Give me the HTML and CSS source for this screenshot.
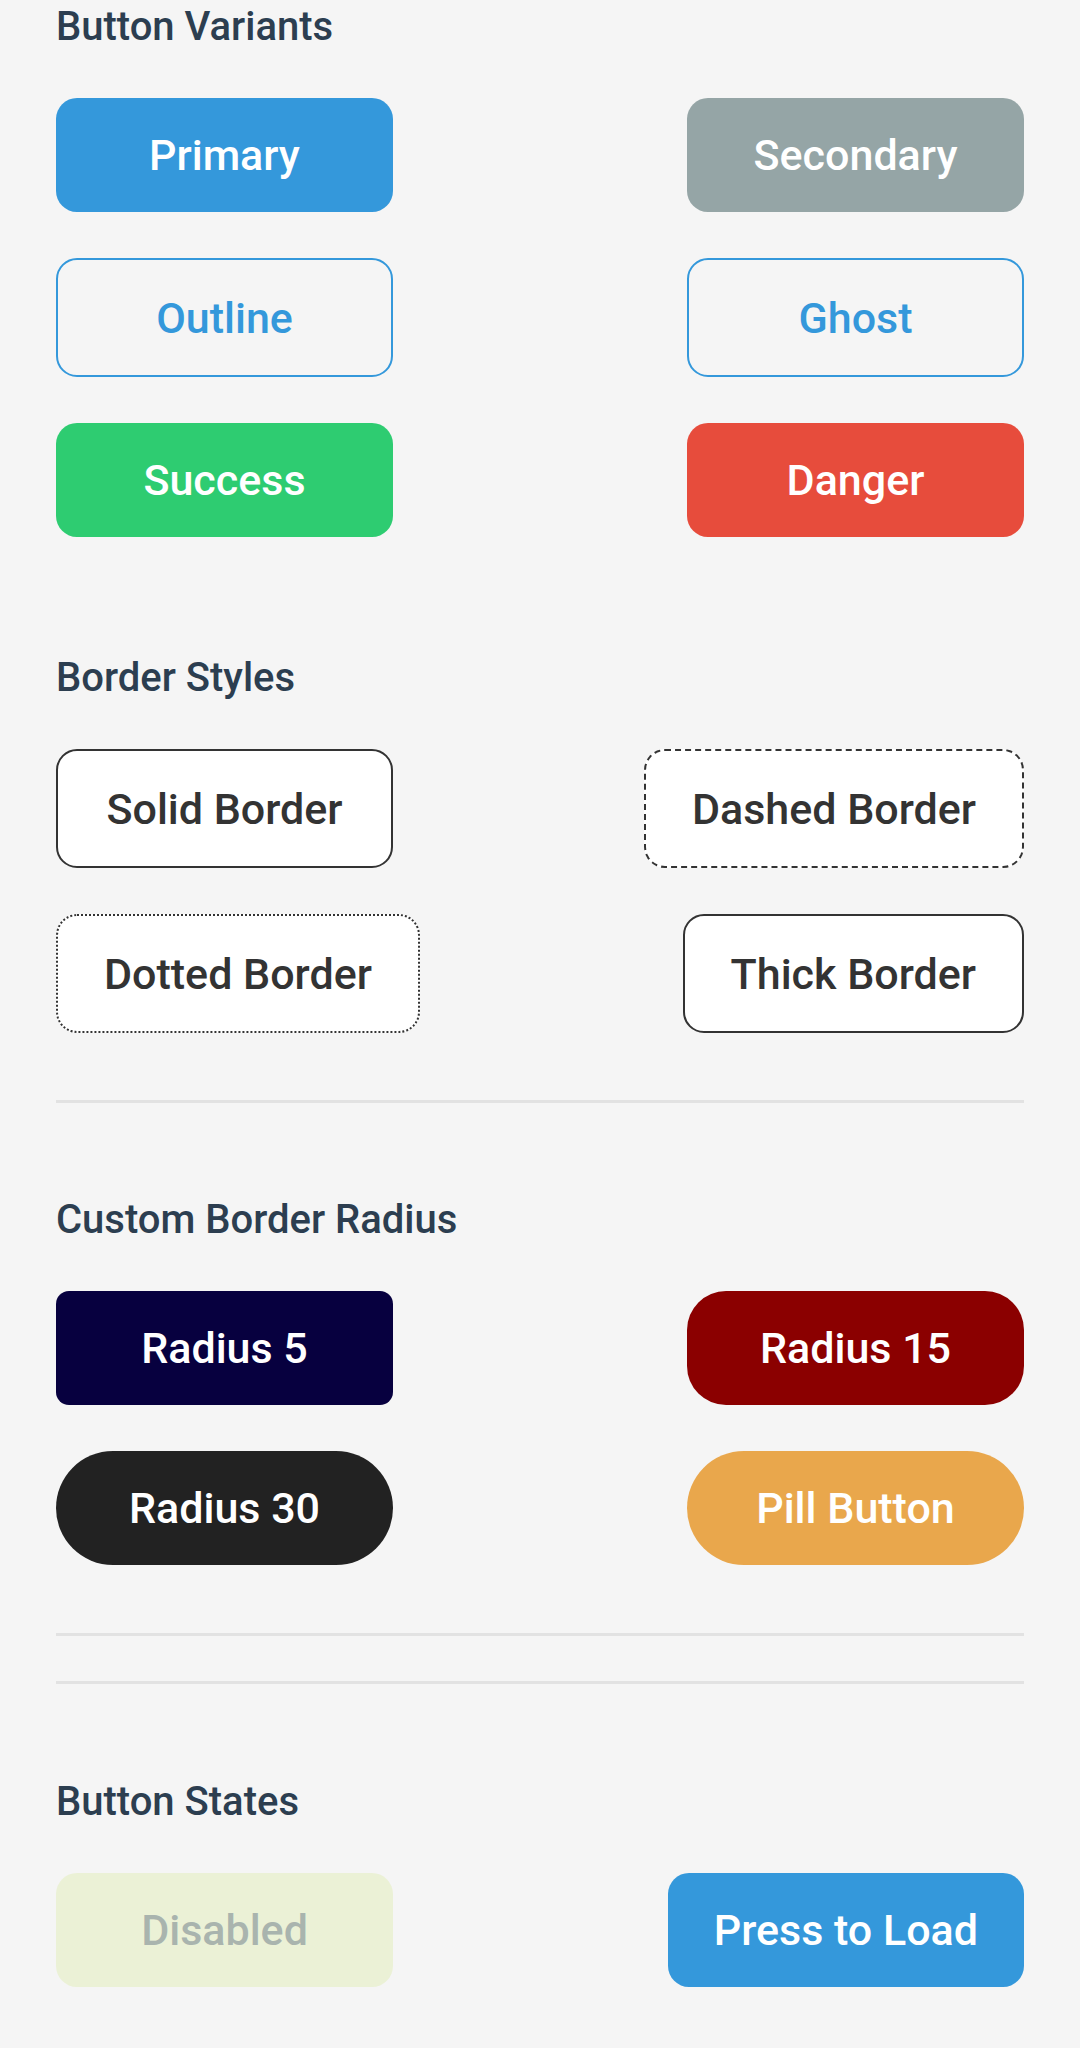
FILE: index.html
```html
<!DOCTYPE html>
<html lang="en">
<head>
<meta charset="utf-8">
<title>Buttons</title>
<link rel="stylesheet" href="styles.css">
</head>
<body>
<main class="page">
  <section class="section section-variants">
    <h2 class="title">Button Variants</h2>
    <div class="rows">
      <div class="row">
        <button class="btn btn-primary">Primary</button>
        <button class="btn btn-secondary">Secondary</button>
      </div>
      <div class="row">
        <button class="btn btn-outline">Outline</button>
        <button class="btn btn-ghost">Ghost</button>
      </div>
      <div class="row">
        <button class="btn btn-success">Success</button>
        <button class="btn btn-danger">Danger</button>
      </div>
    </div>
  </section>

  <section class="section">
    <h2 class="title">Border Styles</h2>
    <div class="rows">
      <div class="row">
        <button class="btn btn-bordered btn-solid">Solid Border</button>
        <button class="btn btn-bordered btn-dashed">Dashed Border</button>
      </div>
      <div class="row">
        <button class="btn btn-bordered btn-dotted">Dotted Border</button>
        <button class="btn btn-bordered btn-thick">Thick Border</button>
      </div>
    </div>
  </section>

  <hr class="divider divider-a">

  <section class="section">
    <h2 class="title">Custom Border Radius</h2>
    <div class="rows">
      <div class="row">
        <button class="btn btn-r5">Radius 5</button>
        <button class="btn btn-r15">Radius 15</button>
      </div>
      <div class="row">
        <button class="btn btn-r30">Radius 30</button>
        <button class="btn btn-pill">Pill Button</button>
      </div>
    </div>
  </section>

  <hr class="divider divider-b">
  <hr class="divider divider-c">

  <section class="section">
    <h2 class="title">Button States</h2>
    <div class="rows">
      <div class="row">
        <button class="btn btn-disabled" disabled>Disabled</button>
        <button class="btn btn-primary">Press to Load</button>
      </div>
    </div>
  </section>
</main>
</body>
</html>
```

FILE: styles.css
```css
* {
  box-sizing: border-box;
}

html, body {
  margin: 0;
  padding: 0;
  background: #f5f5f5;
}

body {
  font-family: Roboto, "Liberation Sans", Arial, sans-serif;
  width: 1080px;
  min-height: 2048px;
  overflow: hidden;
}

.page {
  padding: 3px 56px 0 56px;
}

.section-variants {
  margin-bottom: 117px;
}

.title {
  margin: 0 0 47px 0;
  font-size: 40px;
  line-height: 48px;
  font-weight: 500;
  color: #2c3e50;
}

.rows {
  display: flex;
  flex-direction: column;
  gap: 46px;
}

.row {
  display: flex;
  justify-content: space-between;
  align-items: flex-start;
}

.btn {
  box-sizing: content-box;
  min-width: 245px;
  height: 114px;
  padding: 0 46px;
  margin: 0;
  border: none;
  border-radius: 21px;
  display: flex;
  align-items: center;
  justify-content: center;
  font-family: Roboto, "Liberation Sans", Arial, sans-serif;
  font-size: 43px;
  font-weight: 500;
  color: #ffffff;
  white-space: nowrap;
  cursor: pointer;
}

.btn-primary { background: #3498db; }
.btn-secondary { background: #95a5a6; }
.btn-success { background: #2ecc71; }
.btn-danger { background: #e74c3c; }

.btn-outline,
.btn-ghost {
  background: transparent;
  border: 2px solid #3498db;
  color: #3498db;
  min-width: 241px;
  height: 115px;
}

.btn-bordered {
  background: #ffffff;
  color: #333333;
  border: 2px solid #333333;
  min-width: 241px;
  height: 115px;
  font-weight: 500;
}

.btn-dashed { border-style: dashed; }
.btn-dotted { border-style: dotted; }
.btn-thick { border-width: 2.5px; }

.btn-r5 { background: #07003f; border-radius: 13px; }
.btn-r15 { background: #8b0000; border-radius: 39px; }
.btn-r30 { background: #222222; border-radius: 79px; }
.btn-pill { background: #e9a74c; border-radius: 999px; }

.btn-disabled {
  background: #ebf1d6;
  color: #a9b4ae;
  cursor: default;
}

.divider {
  height: 3px;
  border: none;
  background: #e2e2e2;
  margin: 0;
}

.divider-a { margin: 67px 0 93px 0; }
.divider-b { margin: 68px 0 45px 0; }
.divider-c { margin: 0 0 94px 0; }
```
